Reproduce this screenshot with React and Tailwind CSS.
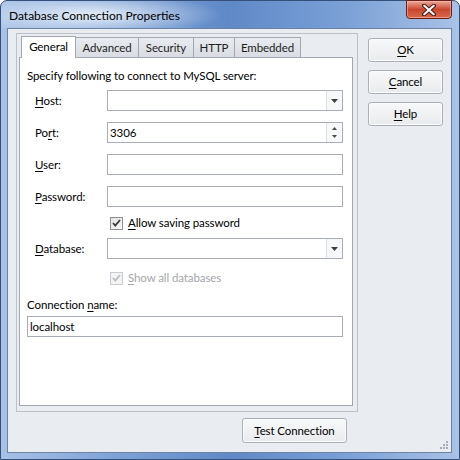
import React from "react";

const U = ({ children }) => (
  <span className="underline decoration-1 underline-offset-[2px]">{children}</span>
);

function DropArrow() {
  return (
    <div className="w-[16px] self-stretch border-l border-[#dde1e6] bg-[#f7f8fa] flex items-center justify-center">
      <svg width="7" height="4" viewBox="0 0 7 4">
        <path d="M0 0h7L3.5 4z" fill="#3f3f3f" />
      </svg>
    </div>
  );
}

function Spinner() {
  return (
    <div className="w-[16px] self-stretch border-l border-[#dde1e6] bg-[#f7f8fa] flex flex-col items-center justify-center gap-[5px]">
      <svg width="5" height="3" viewBox="0 0 5 3">
        <path d="M0 3h5L2.5 0z" fill="#4a4a4a" />
      </svg>
      <svg width="5" height="3" viewBox="0 0 5 3">
        <path d="M0 0h5L2.5 3z" fill="#4a4a4a" />
      </svg>
    </div>
  );
}

function Field({ value, extra, w = "w-[236px]" }) {
  return (
    <div className={`${w} h-[21px] border border-[#a9aeb6] bg-white flex items-stretch`}>
      <div className="flex-1 pl-[2px] flex items-center text-[11.5px] leading-none">{value}</div>
      {extra}
    </div>
  );
}

function Row({ label, children, mb = "mb-[11px]" }) {
  return (
    <div className={`flex items-center h-[21px] ${mb}`}>
      <div className="w-[80px] pl-[8px] text-[11.5px]">{label}</div>
      {children}
    </div>
  );
}

function Check({ disabled }) {
  return (
    <div
      className={`w-[13px] h-[13px] border ${
        disabled ? "border-[#c9ccd1] bg-[#f4f4f4]" : "border-[#8e8f8f] bg-gradient-to-br from-[#e3e3e3] to-[#f8f8f8]"
      } flex items-center justify-center`}
    >
      <svg width="9" height="8" viewBox="0 0 9 8">
        <path
          d="M1 4l2.3 2.6L8 1"
          fill="none"
          stroke={disabled ? "#b9bcc1" : "#3b3b3b"}
          strokeWidth="1.8"
        />
      </svg>
    </div>
  );
}

function Btn({ children, w = "w-[75px]", h = "h-[24px]" }) {
  return (
    <div
      className={`${w} ${h} rounded-[3px] border border-[#abb0b7] bg-gradient-to-b from-[#f8f9fa] to-[#e8eaed] flex items-center justify-center text-[11.5px] shadow-[inset_0_0_0_1px_#fbfcfd]`}
    >
      {children}
    </div>
  );
}

function Tab({ label, w, selected }) {
  if (selected)
    return (
      <div
        className={`${w} h-[22px] bg-white border border-[#a3a8b0] border-b-0 relative z-10 -mb-px flex items-center justify-center text-[11.5px] pb-[1px]`}
      >
        {label}
      </div>
    );
  return (
    <div
      className={`${w} h-[20px] -ml-px border border-[#a3a8b0] border-b-0 bg-gradient-to-b from-[#e8ebef] to-[#d9dde3] flex items-center justify-center text-[11.5px] text-[#1e1e1e]`}
    >
      {label}
    </div>
  );
}

export default function App() {
  return (
    <div
      className="w-[460px] h-[460px] rounded-t-[7px] border border-[#34507a] flex flex-col pl-[6px] pr-[7px] pb-[6px] text-black tracking-[-0.1px]"
      style={{
        fontFamily: 'Lato, "Noto Sans", sans-serif',
        background:
          "radial-gradient(ellipse 130px 22px at 90px 14px, rgba(235,242,250,0.95), rgba(235,242,250,0) 100%), linear-gradient(90deg, #a7c1e6 0%, #7ea2d6 25%, #5f89c7 50%, #7aa0d6 75%, #a9c2e6 100%)",
      }}
    >
      {/* title bar */}
      <div className="h-[27px] flex items-start justify-between">
        <div className="pl-[2px] pt-[7px] text-[12px] leading-[16px] tracking-normal">Database Connection Properties</div>
        <div className="w-[46px] h-[19px] -mt-px rounded-b-[4px] border border-[#6a2016] bg-gradient-to-b from-[#e8a898] via-[#c9462f] to-[#d96a4c] flex items-center justify-center shadow-[inset_0_0_0_1px_rgba(255,200,190,0.5)]">
          <svg width="14" height="12" viewBox="0 0 14 12">
            <path d="M2 1.5L12 10.5M12 1.5L2 10.5" stroke="#4b1410" strokeWidth="4" strokeLinecap="round" />
            <path d="M2.3 1.8L11.7 10.2M11.7 1.8L2.3 10.2" stroke="#ffffff" strokeWidth="2.2" strokeLinecap="round" />
          </svg>
        </div>
      </div>

      {/* client area */}
      <div className="flex-1 border border-[#6d83a6] bg-[#e9ecf1] relative flex">
        {/* left column */}
        <div className="ml-[8px] mt-[4px] flex flex-col">
          <div className="w-[342px] h-[379px] border border-[#bcc1c8] pl-[2px] pt-[1px] pr-[4px] pb-[5px] flex flex-col">
            <div className="h-[22px] flex items-end pl-[2px]">
              <Tab label="General" w="w-[55px]" selected />
              <Tab label="Advanced" w="w-[64px]" />
              <Tab label="Security" w="w-[56px]" />
              <Tab label="HTTP" w="w-[42px]" />
              <Tab label="Embedded" w="w-[67px]" />
            </div>
            <div className="flex-1 bg-white border border-[#a3a8b0] pl-[7px] pt-[10px]">
              <div className="text-[11.5px] leading-[16px] mb-[6px]">
                Specify following to connect to MySQL server:
              </div>
              <Row label={<><U>H</U>ost:</>}>
                <Field extra={<DropArrow />} />
              </Row>
              <Row label={<>Po<U>r</U>t:</>}>
                <Field value="3306" extra={<Spinner />} />
              </Row>
              <Row label={<><U>U</U>ser:</>}>
                <Field />
              </Row>
              <Row label={<><U>P</U>assword:</>} mb="mb-[8px]">
                <Field />
              </Row>
              <div className="h-[16px] flex items-center pl-[83px] gap-[5px] mb-[7px]">
                <Check />
                <span className="text-[11.5px]"><U>A</U>llow saving password</span>
              </div>
              <Row label={<><U>D</U>atabase:</>}>
                <Field extra={<DropArrow />} />
              </Row>
              <div className="h-[16px] flex items-center pl-[83px] gap-[5px] mb-[11px]">
                <Check disabled />
                <span className="text-[11.5px] text-[#a3a6ab]"><U>S</U>how all databases</span>
              </div>
              <div className="text-[11.5px] leading-[16px] mb-[3px]">
                Connection <U>n</U>ame:
              </div>
              <Field value="localhost" w="w-[316px]" />
            </div>
          </div>
          <div className="flex justify-end pr-[11px] mt-[6px]">
            <Btn w="w-[105px]" h="h-[25px]">
              <span><U>T</U>est Connection</span>
            </Btn>
          </div>
        </div>

        {/* right column */}
        <div className="ml-[10px] mt-[9px] flex flex-col gap-[8px]">
          <Btn><span><U>O</U>K</span></Btn>
          <Btn><span><U>C</U>ancel</span></Btn>
          <Btn><span><U>H</U>elp</span></Btn>
        </div>

        {/* resize grip */}
        <div className="absolute right-[2px] bottom-[2px]">
          <svg width="10" height="10" viewBox="0 0 10 10">
            {[
              [8, 2], [8, 5], [8, 8], [5, 5], [5, 8], [2, 8],
            ].map(([x, y], i) => (
              <rect key={i} x={x - 1} y={y - 1} width="2" height="2" fill="#a6acb5" />
            ))}
          </svg>
        </div>
      </div>
    </div>
  );
}
